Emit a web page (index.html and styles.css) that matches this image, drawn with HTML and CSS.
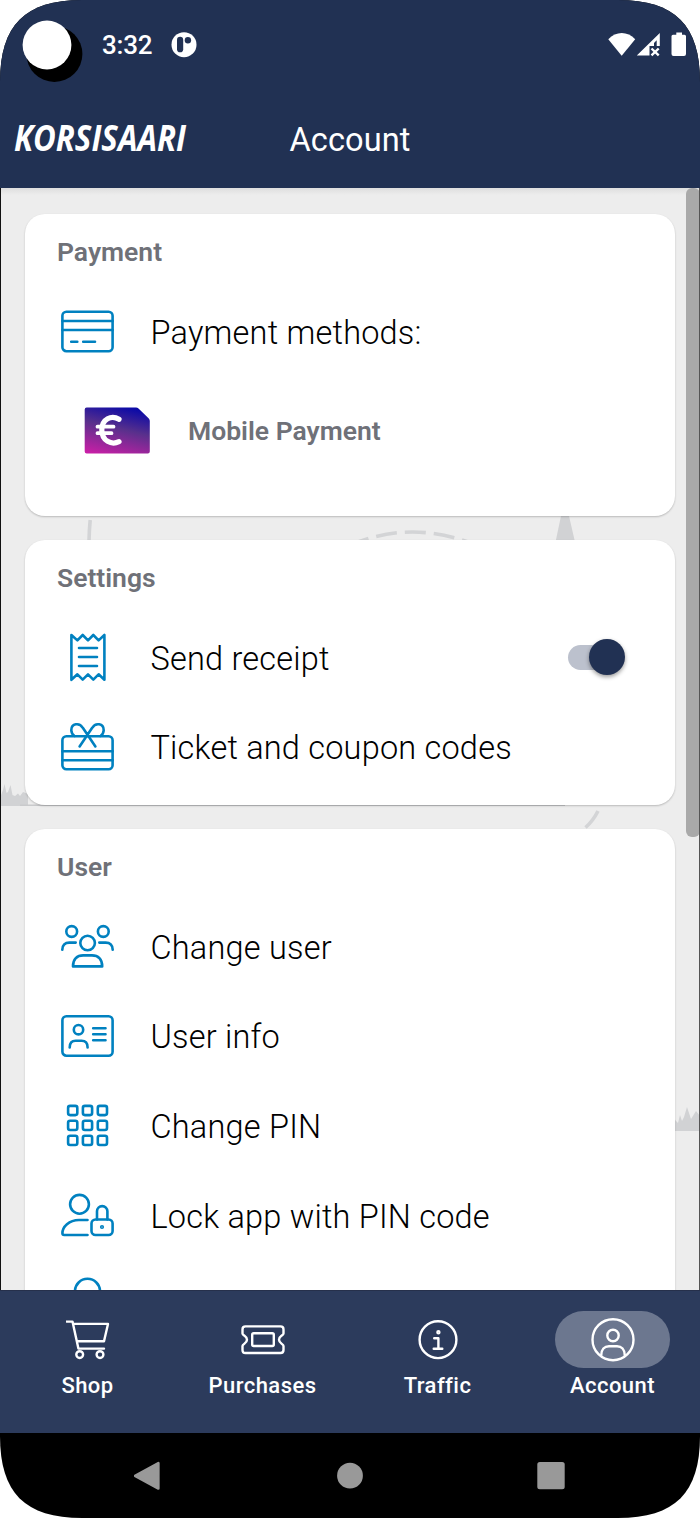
FILE: index.html
```html
<!DOCTYPE html>
<html lang="en">
<head>
<meta charset="utf-8">
<title>Account</title>
<link rel="stylesheet" href="styles.css">
</head>
<body>
<div class="phone">
  <header class="header">
    <div class="status">
      <svg class="camera" width="62" height="64" viewBox="0 0 62 64"><circle cx="32.4" cy="36" r="28" fill="#000"/><circle cx="25" cy="27" r="24.400" fill="#fff"/></svg>
      <span class="time">3:32</span>
      <svg class="badge" width="26" height="26" viewBox="0 0 26 26"><circle cx="13" cy="12.700" r="12.5" fill="#fff"/><rect x="6" y="4.800" width="6.200" height="15.500" rx="3.100" fill="#213153"/><circle cx="16.900" cy="8.200" r="3.200" fill="#213153"/></svg>
      <svg class="signals" width="80" height="26" viewBox="0 0 80 26" fill="#fff"><path d="M.3 7.200C8-1 19.500-1 27.200 7.200L13.700 23.800Z"/><path d="M28.800 23.600 51.800 1V14H48.700V8.200L46 11V14H41.500V23.600Z"/><path d="M43.500 16.500 50.700 23.300M50.700 16.500 43.500 23.300" stroke="#fff" stroke-width="2.400"/><path d="M68.300.6H74V2.800H76.500Q78 2.800 78 4.300V22Q78 24 76 24H65.500Q63.500 24 63.500 22V4.300Q63.500 2.800 65 2.800H68.300Z"/></svg>
    </div>
    <div class="appbar">
      <svg class="logo" width="200" height="56" viewBox="0 0 200 56"><text class="logo-text" x="2" y="40" textLength="172" lengthAdjust="spacingAndGlyphs">KORSISAARI</text></svg>
      <h1 class="title">Account</h1>
    </div>
  </header>

  <main class="content">
    <svg class="scenery" width="700" height="1102" viewBox="0 188 700 1102">
      <path d="M1 806V795L3 790 4.500 784 6.500 793 8 792 10.500 785 12.500 795 15 796 18 793.500 20 796 23 792 28 794V806Z" fill="#d1d2d4"/>
      <path d="M20 804.500H565V806H20Z" fill="#c9cacc"/>
      <path d="M90.200 520Q89.200 530 89 541" fill="none" stroke="#d3d4d6" stroke-width="3.600"/>
      <path d="M358 542Q412 522 468 542" fill="none" stroke="#d3d4d6" stroke-width="3.600" stroke-dasharray="21 8" stroke-dashoffset="10"/>
      <path d="M561 516H569L575 542H555.500Z" fill="#d1d2d4"/>
      <path d="M598 811Q593 821 585.500 827.500" fill="none" stroke="#d3d4d6" stroke-width="3.600"/>
      <path d="M674 1131V1118L676 1121 678 1123 680 1115 682 1121 684 1117 687 1107 691 1119 696 1111 700 1116V1131Z" fill="#d1d2d4"/>
    </svg>

    <section class="card card-payment">
      <h2 class="card-title">Payment</h2>
      <div class="row">
        <svg class="icon" viewBox="0 0 56 56"><rect x="2.400" y="7.800" width="50.200" height="39.400" rx="4"/><path d="M2.400 17H52.600M2.400 26H52.600M11.200 37.700H17.300M23.200 37.700H35"/></svg>
        <span class="label">Payment methods:</span>
      </div>
      <div class="row row-method">
        <svg class="pay" width="68" height="48" viewBox="0 0 68 48">
          <defs><linearGradient id="pay" gradientUnits="userSpaceOnUse" x1="44" y1="1" x2="32" y2="52"><stop offset="0" stop-color="#0d0ba6"/><stop offset=".42" stop-color="#58308c"/><stop offset="1" stop-color="#c81fa6"/></linearGradient></defs>
          <path d="M2.700 .4H52Q53.500 .4 54.500 1.400L64.800 11.600Q65.800 12.600 65.800 14.100V44.400Q65.800 46.400 63.800 46.400H2.700Q.7 46.400 .7 44.400V2.400Q.7 .4 2.700 .4Z" fill="url(#pay)"/>
          <path d="M35 12.300C27.500 7.700 17.800 12 17.800 23S27.500 38.300 35 34.700" fill="none" stroke="#fff" stroke-width="5.200" stroke-linecap="round"/><path d="M13.500 19.700H29.500M13.500 26.200H27.500" stroke="#fff" stroke-width="3.800" stroke-linecap="round"/>
        </svg>
        <span class="method">Mobile Payment</span>
      </div>
    </section>

    <section class="card card-settings">
      <h2 class="card-title">Settings</h2>
      <div class="row">
        <svg class="icon" viewBox="0 0 56 56"><path d="M11.400 5 17.400 10.400 22.700 5 28 10.400 33.300 5 38.600 10.400 44.400 5V49.800L38.600 44.300 33.300 49.600 28 44.300 22.700 49.600 17.400 44.300 11.400 49.800ZM19 18H37M19 27H37M19 36H37"/></svg>
        <span class="label">Send receipt</span>
        <span class="switch"><span class="thumb"></span></span>
      </div>
      <div class="row">
        <svg class="icon" viewBox="0 0 56 56"><rect x="2.400" y="17.300" width="50.200" height="33" rx="4"/><path d="M2.400 32.300H52.600M2.400 41.200H52.600M35.400 27.500 22.800 8.800C19.500 3.300 11.300 4.200 11.300 11.200Q11.500 15 14.500 17M19.600 27.500 32.200 8.800C35.500 3.300 43.700 4.200 43.700 11.200Q43.500 15 40.500 17"/></svg>
        <span class="label">Ticket and coupon codes</span>
      </div>
    </section>

    <section class="card card-user">
      <h2 class="card-title">User</h2>
      <div class="row">
        <svg class="icon" viewBox="0 0 56 56"><circle cx="11.700" cy="12.500" r="5.400"/><circle cx="43.300" cy="12.500" r="5.400"/><circle cx="27.600" cy="24" r="7.300"/><path d="M2.300 30.700C2.300 26 5 23.600 9.300 23.600H15.700M52.700 30.700C52.700 26 50 23.600 45.700 23.600H39.300M13 47.400C13 40.300 17 36.400 23.200 36.400H32C38.200 36.400 42.200 40.300 42.200 47.400Z"/></svg>
        <span class="label">Change user</span>
      </div>
      <div class="row">
        <svg class="icon" viewBox="0 -.7 56 56"><rect x="2.400" y="7.600" width="50.200" height="39.400" rx="4"/><circle cx="18.500" cy="21" r="4.700"/><path d="M9.700 38.700C9.700 34 12 32 15.700 32H21.500C25.200 32 27.600 34 27.600 38.700M33.200 19.600H45.500M33.200 25.600H45.500M33.200 31.500H45.500"/></svg>
        <span class="label">User info</span>
      </div>
      <div class="row">
        <svg class="icon" viewBox="0 0 56 56"><rect x="8.100" y="7.900" width="9.200" height="9.200" rx="2"/><rect x="22.900" y="7.900" width="9.200" height="9.200" rx="2"/><rect x="37.800" y="7.900" width="9.200" height="9.200" rx="2"/><rect x="8.100" y="22.800" width="9.200" height="9.200" rx="2"/><rect x="22.900" y="22.800" width="9.200" height="9.200" rx="2"/><rect x="37.800" y="22.800" width="9.200" height="9.200" rx="2"/><rect x="8.100" y="37.800" width="9.200" height="9.200" rx="2"/><rect x="22.900" y="37.800" width="9.200" height="9.200" rx="2"/><rect x="37.800" y="37.800" width="9.200" height="9.200" rx="2"/></svg>
        <span class="label">Change PIN</span>
      </div>
      <div class="row">
        <svg class="icon" viewBox="0 0 56 56"><circle cx="19.500" cy="16.300" r="9.400"/><path d="M27.500 32H19C9 32 2.400 39 2.400 45.300Q2.400 47 4.200 47H27.500M37 31.500V23.300A5.200 5.200 0 0 1 47.400 23.300V31.500"/><rect x="31.500" y="31.500" width="21.100" height="15.500" rx="4"/><circle cx="42" cy="39" r=".8" /></svg>
        <span class="label">Lock app with PIN code</span>
      </div>
      <div class="row">
        <svg class="icon" viewBox="0 0 56 56"><circle cx="27.500" cy="14.300" r="12.500"/><path d="M6 53C8 42 18 36 27.500 36S47 42 49 53"/></svg>
      </div>
    </section>
    <div class="scrollbar"></div>
  </main>

  <nav class="tabs">
    <div class="tab"><span class="pill"><svg class="tab-icon" viewBox="0 0 44 44"><path d="M.8 3.600H6.500L12.400 30.600H38M7.200 5.900H42L38 23.300H11"/><circle cx="13.700" cy="36.600" r="3.400"/><circle cx="34" cy="36.600" r="3.400"/></svg></span><span class="tab-label">Shop</span></div>
    <div class="tab"><span class="pill"><svg class="tab-icon" viewBox="0 0 44 44"><path d="M4.500 8.400H39.500Q42.500 8.400 42.500 11.400V15.500C42.500 17.500 38 18 38 21.700S42.500 26 42.500 28V32Q42.500 35 39.500 35H4.500Q1.500 35 1.500 32V28C1.500 26 6 25.400 6 21.700S1.500 17.500 1.500 15.500V11.400Q1.500 8.400 4.500 8.400Z"/><rect x="11.200" y="15.300" width="21.600" height="12.700" rx="1.500"/></svg></span><span class="tab-label">Purchases</span></div>
    <div class="tab"><span class="pill"><svg class="tab-icon" viewBox="0 0 44 44"><circle cx="22" cy="21.700" r="18.400"/><circle cx="22.400" cy="14.300" r="1" /><path d="M18.200 20.300H22.400V30.600M17.700 30.800H26.300"/></svg></span><span class="tab-label">Traffic</span></div>
    <div class="tab"><span class="pill pill-active"><svg class="tab-icon" viewBox="0 0 44 44"><circle cx="22" cy="21.700" r="20.500"/><circle cx="22" cy="17.500" r="5.700"/><path d="M10.200 37.500C10.200 31.500 13.500 28.200 18 28.200H26C30.500 28.200 33.800 31.500 33.800 37.500"/></svg></span><span class="tab-label">Account</span></div>
  </nav>

  <footer class="softkeys">
    <svg width="30" height="30" viewBox="0 0 30 30"><path d="M1 14.800 24.400 2V27.600Z"/></svg>
    <svg width="30" height="30" viewBox="0 0 30 30"><circle cx="15" cy="14.700" r="12.900"/></svg>
    <svg width="30" height="30" viewBox="0 0 30 30"><rect x="1.300" y=".9" width="27.400" height="27.400" rx="2.500"/></svg>
  </footer>
</div>
</body>
</html>
```
FILE: styles.css
```css
* { box-sizing: border-box; }
body { margin: 0; background: #fff; font-family: Roboto, "Liberation Sans", sans-serif; }
svg { display: block; flex: none; }

.phone {
  width: 700px;
  height: 1518px;
  display: flex;
  flex-direction: column;
  background: #000;
  overflow: hidden;
  clip-path: path("M0 82C0 25 25 0 82 0H618C675 0 700 25 700 82V1436C700 1493 675 1518 618 1518H82C25 1518 0 1493 0 1436Z");
}

.header { flex: none; height: 188px; background: #213153; color: #fff; }
.status { height: 90px; display: flex; align-items: center; padding: 0 12px 0 22px; }
.camera { margin-top: 10px; }
.time { margin-left: 18px; font-size: 26px; font-weight: 500; line-height: 30px; letter-spacing: -.2px; }
.badge { margin-left: 19px; }
.signals { margin-left: auto; }
.appbar { height: 98px; display: grid; grid-template-columns: 1fr auto 1fr; align-items: center; padding: 0 12px; }
.logo { justify-self: start; }
.logo-text { font-family: "Open Sans", sans-serif; font-size: 35px; font-weight: 700; font-style: italic; fill: #fff; }
.title { margin: 0; padding-top: 2px; font-size: 32.500px; font-weight: 400; line-height: 40px; letter-spacing: .1px; }

.content {
  position: relative;
  flex: none;
  height: 1102px;
  padding: 26px 24px 0;
  display: flex;
  flex-direction: column;
  gap: 24px;
  background: linear-gradient(#dedede, #ededed 7px);
  border-left: 1px solid #111;
  border-right: 1px solid #555;
  overflow: hidden;
}
.scenery { position: absolute; left: -1px; top: 0; }
.scrollbar { position: absolute; right: -1px; top: 0; width: 14px; height: 649px; border-radius: 6px; background: #a9a9a9; }

.card { position: relative; flex: none; border-radius: 20px; background: #fff; box-shadow: 0 1px 2px rgba(0, 0, 0, .22); padding-left: 35px; }
.card-payment { height: 302px; }
.card-settings { height: 265px; }
.card-user { height: 560px; }
.card-title { margin: 0 0 0 -3px; height: 73px; padding-top: 23px; font-size: 26.500px; line-height: 30px; font-weight: 600; color: #6f7178; }
.row { height: 89.600px; display: flex; align-items: center; }
.icon { width: 56px; height: 56px; fill: none; stroke: #0081c0; stroke-width: 2.600px; stroke-linecap: round; stroke-linejoin: round; }
.label { margin-left: 34.500px; padding-top: 2px; font-size: 32.500px; line-height: 40px; font-weight: 330; color: #000; letter-spacing: .2px; }
.row-method { height: 109px; padding-left: 24px; }
.method { margin-left: 36px; font-size: 26.500px; line-height: 30px; font-weight: 600; color: #6f7178; }

.switch { margin-left: auto; margin-right: 53px; width: 54px; height: 25px; border-radius: 13px; background: #bcc1cd; display: flex; align-items: center; justify-content: flex-end; }
.thumb { width: 36px; height: 36px; flex: none; margin: -1px -3px 0 0; border-radius: 50%; background: #213153; box-shadow: 0 2px 4px rgba(0, 0, 0, .4); }

.tabs { flex: none; height: 143px; display: grid; grid-template-columns: repeat(4, 175px); background: #2c3b5c; color: #fff; border-top: 1px solid #26304b; }
.tab { display: flex; flex-direction: column; align-items: center; padding-top: 20px; }
.pill { width: 115px; height: 57px; border-radius: 29px; display: flex; align-items: center; justify-content: center; }
.pill-active { background: #6c778f; }
.tab-icon { width: 44px; height: 44px; fill: none; stroke: #fff; stroke-width: 2.400px; stroke-linecap: round; stroke-linejoin: round; }
.tab-label { margin-top: 5px; font-size: 22px; line-height: 26px; font-weight: 500; letter-spacing: .45px; }

.softkeys { flex: none; height: 85px; display: flex; justify-content: center; align-items: center; gap: 171px; fill: #999; stroke: #999; }
.softkeys path { stroke-width: 2.500px; stroke-linejoin: round; }
.softkeys rect, .softkeys circle { stroke: none; }
```
